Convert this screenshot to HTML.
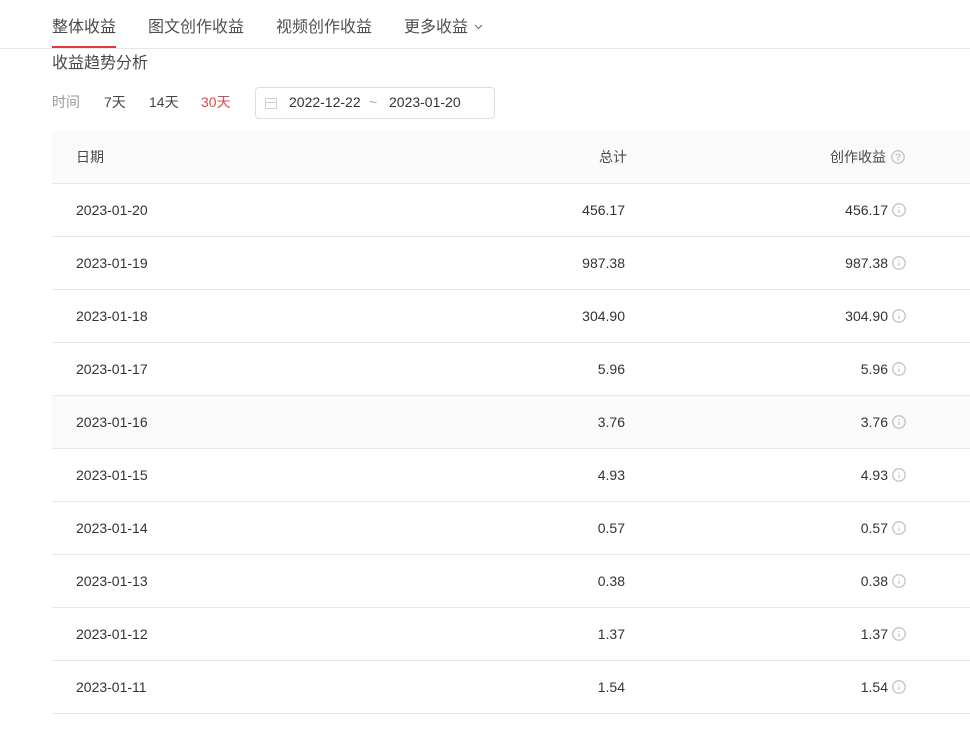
<!DOCTYPE html>
<html lang="zh">
<head>
<meta charset="utf-8">
<style>
html,body{margin:0;padding:0;background:#fff}
body{width:970px;height:731px;position:relative;overflow:hidden;font-family:"Liberation Sans","Noto Sans CJK SC",sans-serif;color:#333;font-size:14px}
.a{position:absolute;white-space:nowrap}
.tab{font-size:16px;line-height:24px;top:16px;color:#505050}
.row{position:absolute;left:52px;width:918px;height:52px;border-bottom:1px solid #e8e8e8}
.row span{position:absolute;line-height:52px;top:0;white-space:nowrap}
.d{left:24px}
.t{right:345px}
.c{right:82px}
.row svg{position:absolute;left:840px;top:19px}
</style>
</head>
<body>
<div class="a" style="left:0;top:48px;width:970px;height:1px;background:#e8e8e8"></div>
<div class="a tab" style="left:52px;color:#484848">整体收益</div>
<div class="a" style="left:52px;top:46px;width:64px;height:2px;background:#e0393e"></div>
<div class="a tab" style="left:148px">图文创作收益</div>
<div class="a tab" style="left:276px">视频创作收益</div>
<div class="a tab" style="left:404px">更多收益</div>
<svg class="a" style="left:474px;top:24px" width="9" height="6" viewBox="0 0 9 6"><path d="M1 1L4.500 4.500L8 1" fill="none" stroke="#666" stroke-width="1"/></svg>
<div class="a" style="left:52px;top:52px;font-size:16px;line-height:24px;color:#484848">收益趋势分析</div>
<div class="a" style="left:52px;top:92px;line-height:20px;color:#999">时间</div>
<div class="a" style="left:104px;top:92px;line-height:20px;color:#444">7天</div>
<div class="a" style="left:149px;top:92px;line-height:20px;color:#444">14天</div>
<div class="a" style="left:201px;top:92px;line-height:20px;color:#e2474c">30天</div>
<div class="a" style="left:255px;top:87px;width:238px;height:30px;border:1px solid #ddd;border-radius:4px"></div>
<svg class="a" style="left:265px;top:97px" width="12" height="12" viewBox="0 0 12 12"><path d="M.5 1.500H11.500V11.500H.5ZM.5 5.500H11.500" fill="none" stroke="#d0d0d0" stroke-width="1"/></svg>
<div class="a" style="left:289px;top:92px;line-height:20px">2022-12-22</div>
<div class="a" style="left:369px;top:92px;line-height:20px;color:#aaa">~</div>
<div class="a" style="left:389px;top:92px;line-height:20px">2023-01-20</div>

<div class="a" style="left:52px;top:131px;width:918px;height:52px;background:#fafafa;border-bottom:1px solid #e8e8e8"></div>
<div class="a" style="left:76px;top:147px;line-height:20px;color:#484848">日期</div>
<div class="a" style="right:343px;top:147px;line-height:20px;color:#484848">总计</div>
<div class="a" style="right:84px;top:147px;line-height:20px;color:#484848">创作收益</div>
<svg class="a" style="left:891px;top:150px" width="14" height="14" viewBox="0 0 14 14"><circle cx="7" cy="7" r="6.200" fill="none" stroke="#c8c8c8" stroke-width="1.500"/><text x="7" y="10.700" text-anchor="middle" font-size="10.500" font-weight="bold" fill="#c4c4c4" font-family="Liberation Sans">?</text></svg>

<div class="row" style="top:184px"><span class="d">2023-01-20</span><span class="t">456.17</span><span class="c">456.17</span><svg width="14" height="14" viewBox="0 0 14 14"><circle cx="7" cy="7" r="6.200" fill="none" stroke="#c8c8c8" stroke-width="1.500"/><path d="M7 6.500V10M7 4V5" stroke="#c8c8c8" stroke-width="1.300"/></svg></div>
<div class="row" style="top:237px"><span class="d">2023-01-19</span><span class="t">987.38</span><span class="c">987.38</span><svg width="14" height="14" viewBox="0 0 14 14"><circle cx="7" cy="7" r="6.200" fill="none" stroke="#c8c8c8" stroke-width="1.500"/><path d="M7 6.500V10M7 4V5" stroke="#c8c8c8" stroke-width="1.300"/></svg></div>
<div class="row" style="top:290px"><span class="d">2023-01-18</span><span class="t">304.90</span><span class="c">304.90</span><svg width="14" height="14" viewBox="0 0 14 14"><circle cx="7" cy="7" r="6.200" fill="none" stroke="#c8c8c8" stroke-width="1.500"/><path d="M7 6.500V10M7 4V5" stroke="#c8c8c8" stroke-width="1.300"/></svg></div>
<div class="row" style="top:343px"><span class="d">2023-01-17</span><span class="t">5.96</span><span class="c">5.96</span><svg width="14" height="14" viewBox="0 0 14 14"><circle cx="7" cy="7" r="6.200" fill="none" stroke="#c8c8c8" stroke-width="1.500"/><path d="M7 6.500V10M7 4V5" stroke="#c8c8c8" stroke-width="1.300"/></svg></div>
<div class="row" style="top:396px;background:#fafafa"><span class="d">2023-01-16</span><span class="t">3.76</span><span class="c">3.76</span><svg width="14" height="14" viewBox="0 0 14 14"><circle cx="7" cy="7" r="6.200" fill="none" stroke="#c8c8c8" stroke-width="1.500"/><path d="M7 6.500V10M7 4V5" stroke="#c8c8c8" stroke-width="1.300"/></svg></div>
<div class="row" style="top:449px"><span class="d">2023-01-15</span><span class="t">4.93</span><span class="c">4.93</span><svg width="14" height="14" viewBox="0 0 14 14"><circle cx="7" cy="7" r="6.200" fill="none" stroke="#c8c8c8" stroke-width="1.500"/><path d="M7 6.500V10M7 4V5" stroke="#c8c8c8" stroke-width="1.300"/></svg></div>
<div class="row" style="top:502px"><span class="d">2023-01-14</span><span class="t">0.57</span><span class="c">0.57</span><svg width="14" height="14" viewBox="0 0 14 14"><circle cx="7" cy="7" r="6.200" fill="none" stroke="#c8c8c8" stroke-width="1.500"/><path d="M7 6.500V10M7 4V5" stroke="#c8c8c8" stroke-width="1.300"/></svg></div>
<div class="row" style="top:555px"><span class="d">2023-01-13</span><span class="t">0.38</span><span class="c">0.38</span><svg width="14" height="14" viewBox="0 0 14 14"><circle cx="7" cy="7" r="6.200" fill="none" stroke="#c8c8c8" stroke-width="1.500"/><path d="M7 6.500V10M7 4V5" stroke="#c8c8c8" stroke-width="1.300"/></svg></div>
<div class="row" style="top:608px"><span class="d">2023-01-12</span><span class="t">1.37</span><span class="c">1.37</span><svg width="14" height="14" viewBox="0 0 14 14"><circle cx="7" cy="7" r="6.200" fill="none" stroke="#c8c8c8" stroke-width="1.500"/><path d="M7 6.500V10M7 4V5" stroke="#c8c8c8" stroke-width="1.300"/></svg></div>
<div class="row" style="top:661px"><span class="d">2023-01-11</span><span class="t">1.54</span><span class="c">1.54</span><svg width="14" height="14" viewBox="0 0 14 14"><circle cx="7" cy="7" r="6.200" fill="none" stroke="#c8c8c8" stroke-width="1.500"/><path d="M7 6.500V10M7 4V5" stroke="#c8c8c8" stroke-width="1.300"/></svg></div>
</body>
</html>
